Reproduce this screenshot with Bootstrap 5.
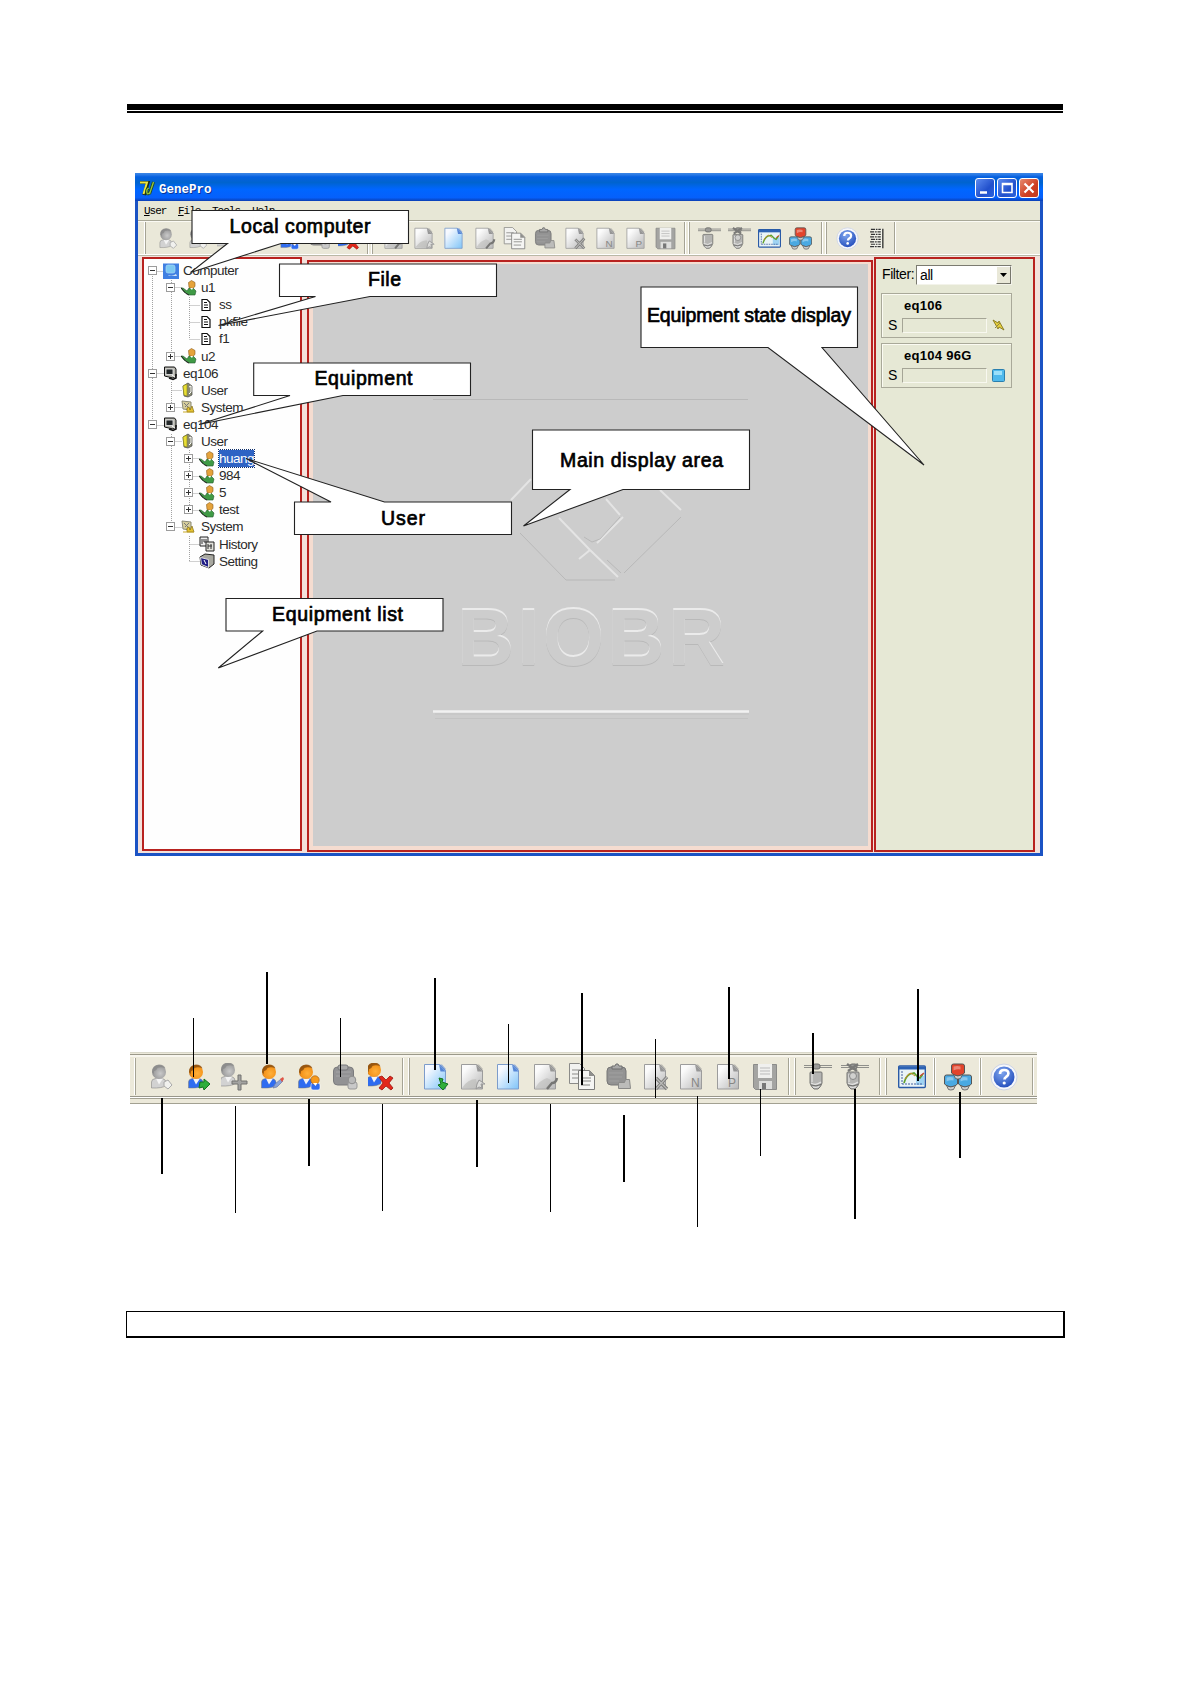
<!DOCTYPE html>
<html lang="en">
  <head>
    <meta charset="UTF-8" />
    <meta name="viewport" content="width=device-width, initial-scale=1.0" />
    <title>GenePro</title>
    <link
      href="https://cdn.jsdelivr.net/npm/bootstrap@5.3.0/dist/css/bootstrap.min.css"
      rel="stylesheet"
    />
    <style>
      body {
        background: #fff;
        color: #000;
        font-family: "Liberation Sans", Arial, sans-serif;
      }
      .sheet {
        width: 1190px;
        height: 1684px;
        padding: 104px 127px 0 127px;
        overflow: hidden;
      }
      .rule-thick { height: 6px; background: #000; }
      .rule-thin { height: 2px; margin-top: 1px; background: #000; }

      /* application window */
      .app-window {
        width: 908px;
        height: 683px;
        margin: 60px 0 0 8px;
        background: #e7e7d6;
        border: solid #1b53c4;
        border-width: 0 3px 3px;
      }
      .title-bar {
        height: 28px;
        margin: 0 -3px;
        padding: 2px 4px 0 5px;
        background: linear-gradient(#3d86e4 0, #2a7ae6 6%, #0560e0 14%, #0064cf 34%, #0066ff 58%, #0560fb 88%, #0b3fb4 100%);
      }
      .title-text {
        font: bold 12.5px "Liberation Mono", monospace;
        color: #fff;
        text-shadow: 1px 1px 0 #0a3596;
      }
      .win-btn {
        width: 20px;
        height: 20px;
        border: 1px solid #fff;
        border-radius: 3px;
        background: linear-gradient(135deg, #5c8bf0, #2150cc 60%, #2b63dd);
      }
      .win-btn.close-btn { background: linear-gradient(135deg, #e68a70, #cf3f22 60%, #c03a20); }
      .menu-row {
        height: 19px;
        padding-left: 6px;
        font: 11px "Liberation Mono", monospace;
        letter-spacing: -1px;
      }
      .menu-row span { width: 34px; }
      .menu-row span:nth-child(3) { width: 40px; }
      .tools-row {
        height: 36px;
        padding: 1px 0 1px 7px;
        background: #eae8d9;
        border-top: 1px solid #a9a898;
        border-bottom: 1px solid #b9b8a6;
        box-shadow: inset 0 1px #fbfaf4, inset 0 -1px #fff;
      }
      .tool-group {
        margin-right: 4px;
        border: solid #a5a394;
        border-width: 0 1px;
        box-shadow: -1px 0 #fff, 1px 0 #fff;
      }
      .tool-group.joined { margin-left: -7px; }
      .tool-slot { width: 30.3px; }
      .tool-slot svg { width: 23px; height: 23px; }

      /* disabled and enabled icon colours */
      .off { --head: url(#headOff); --body: #d2d2d2; --dark: #8a8a8a; --paper: url(#paperOff); --fold: #969696; --edge: #9c9c9c; }
      .on { --head: url(#headOn); --body: #2f6cf0; --dark: #8a4c0c; --paper: url(#paperOn); --fold: #5686d6; --edge: #7c9ccb; }

      /* work area */
      .work-area { height: 597px; padding: 1px 5px 1px 4px; background: #f3e2dc; }
      .red-pane { border: 2px solid #b8221f; }
      .tree-pane { width: 160px; height: 594px; margin-right: 5px; padding: 3px 0 0 4px; background: #fefefe; }
      .main-pane { width: 566px; height: 592px; margin: 3px 1px 0 0; padding: 2px 3px 4px 4px; background: #f5dcd0; }
      .main-canvas { background: #cdcdcd; }
      .state-pane { width: 161px; height: 595px; padding: 5px 21px 0 5px; background: #e6e8d5; }

      .tree-row {
        height: 17.1px;
        line-height: 17px;
        font-size: 13.5px;
        letter-spacing: -0.5px;
        color: #2a2a2a;
      }
      .level-1 { padding-left: 18px; }
      .level-2 { padding-left: 36px; }
      .toggle-box {
        width: 9px;
        height: 9px;
        margin-right: 6px;
        flex: none;
      }
      .tree-row .tree-icon { width: 16px; height: 16px; margin-right: 4px; flex: none; }
      .picked { background: #2e63c4; color: #fff; outline: 1px dotted #10306c; }
      .tree-lines { left: 0; top: 0; }

      .filter-label { font-size: 14px; letter-spacing: -0.4px; width: 35px; padding-left: 1px; }
      .filter-box {
        height: 20px;
        border: 1px solid;
        border-color: #7b7b70 #f3f3ea #f3f3ea #7b7b70;
        background: #fff;
        font-size: 14px;
        letter-spacing: -0.4px;
        padding-left: 3px;
      }
      .filter-arrow { width: 15px; background: #e9e8d8; border: 1px solid; border-color: #fff #77776c #77776c #fff; }
      .state-box {
        height: 45px;
        border: 1px solid #a9a999;
        box-shadow: inset 1px 1px #fbfbf2;
        padding: 3px 6px 0 6px;
        font-size: 14px;
      }
      .state-box + .state-box { margin-top: 5px; }
      .state-name { font-size: 13px; font-weight: bold; line-height: 18px; padding-left: 16px; letter-spacing: 0.3px; }
      .state-line { height: 17px; margin-top: 2px; }
      .state-bar { width: 85px; height: 15px; border: 1px solid; border-color: #a5a596 #f8f8f0 #f8f8f0 #a5a596; }

      .callout-layer { left: 0; top: 0; pointer-events: none; }
      .callout-layer text {
        font-size: 19.5px;
        fill: #000;
        stroke: #000;
        stroke-width: 0.7;
      }

      /* toolbar figure with leader lines */
      .tool-figure { height: 290px; margin-top: 104px; padding: 92px 0 0 3px; }
      .strip {
        width: 907px;
        height: 52px;
        background: #ece9da;
        border-top: 1px solid #d9d8ca;
      }
      .strip-tools {
        height: 43px;
        margin-top: 1px;
        padding: 3px 0 1px 5px;
        border-top: 1px solid #9b998a;
        border-bottom: 1px solid #98968a;
        box-shadow: 0 1px #fff, inset 0 2px #f8f6ee;
      }
      .strip-foot { height: 6px; margin-top: 1px; border: solid #a3a192; border-width: 1px 0; }
      .strip .tool-group { margin-right: 6px; }
      .strip .tool-slot { width: 36.6px; }
      .strip .tool-slot svg { width: 28px; height: 28px; }
      .leader-layer { left: 0; top: 0; }

      .note-box { height: 27px; margin: 61px -2px 0 -1px; border: 2px solid #000; border-top-width: 1px; border-left-width: 1px; }
    </style>
  </head>
  <body>
    <!-- icon sprite -->
    <svg width="0" height="0" class="position-absolute">
      <defs>
        <linearGradient id="paperOff" x1="0" y1="0" x2="1" y2="1">
          <stop offset="0.2" stop-color="#fbfbfb" />
          <stop offset="1" stop-color="#b8b8b8" />
        </linearGradient>
        <linearGradient id="paperOn" x1="0" y1="0" x2="1" y2="1">
          <stop offset="0.2" stop-color="#f6f9ff" />
          <stop offset="1" stop-color="#7fc4f8" />
        </linearGradient>
        <radialGradient id="headOff" cx="0.6" cy="0.6" r="0.65">
          <stop offset="0" stop-color="#c9c9c9" />
          <stop offset="1" stop-color="#8f8f8f" />
        </radialGradient>
        <radialGradient id="headOn" cx="0.6" cy="0.6" r="0.65">
          <stop offset="0" stop-color="#ffb03a" />
          <stop offset="0.7" stop-color="#f4931a" />
          <stop offset="1" stop-color="#b8660c" />
        </radialGradient>
        <radialGradient id="helpFill" cx="0.4" cy="0.3" r="0.8">
          <stop offset="0" stop-color="#7fa6ee" />
          <stop offset="1" stop-color="#1c46b8" />
        </radialGradient>
        <g id="person">
          <path d="M3.5 25V19q0-3 4-3.500l7 0q3.500 1 3.500 4v3q-4 3-14.500 2.500z" style="fill: var(--body)" stroke="#777" stroke-width="0.5" />
          <path d="M8 15.500l3 6 4-6z" fill="#f4f4f4" />
          <circle cx="11" cy="9" r="7" style="fill: var(--head)" />
          <path d="M4 9q0-7 7-7.500 5 0 6.500 4-4-2-8-.5-1 3-3.500 3.300l-.3 3z" style="fill: var(--dark)" opacity="0.8" />
        </g>
        <g id="sheet-shape">
          <path d="M3.500 1.500h15l6 6v18.500h-21z" style="fill: var(--paper); stroke: var(--edge)" />
          <path d="M18 1.500l6.500 7h-5z" style="fill: var(--fold)" />
          <path d="M18 1.500h3l3.500 4v3z" style="fill: var(--fold)" opacity="0.6" />
        </g>
        <g id="bulb">
          <path d="M0 2.500h28M0 4.500h28" stroke="#8f8f8b" stroke-width="1.200" />
          <rect x="9" y="1" width="7" height="5" rx="2" fill="#9a9a98" stroke="#6c6c6a" />
          <path d="M6 10q0-1 1-1h10q1 0 1 1v10q-1 4-4 6h-4q-3-2-4-6z" fill="#b4b4b2" stroke="#747472" />
          <path d="M8 11v8M7 20q5 3 10-1M9 24q3 1 6-.5" fill="none" stroke="#e4e4e3" stroke-width="1.200" />
          <path d="M7 22q5 2 10-.5" fill="none" stroke="#6d6d6b" />
        </g>
        <g id="drum">
          <path d="M1 2q0-2 2-2h9q2 0 2 2v7q-3 3-6.500 3T1 9z" stroke="#555" />
          <path d="M3 10.500q4 3 9 0l-2 4q-3 1-5 0z" fill="#ccc" stroke="#555" stroke-width="0.800" />
          <path d="M3 2.500q4-1 7 0v3q-3-1-7 1z" fill="#fff" opacity="0.350" stroke="none" />
        </g>
      </defs>
      <symbol id="i-user-login" viewBox="0 0 28 28"><use href="#person" /><path d="M16 19l4-2 4 5-4 4-4-3z" fill="#f1f1ee" stroke="#aaa" /></symbol>
      <symbol id="i-user-go" viewBox="0 0 28 28"><use href="#person" /><path d="M15 19h4v-3l6 5-6 6-1-3-4 1z" fill="#2fae3b" stroke="#14731f" /></symbol>
      <symbol id="i-user-add" viewBox="0 0 28 28"><use href="#person" x="-4" y="-2" /><path d="M17 12h3v6h6v3h-6v6h-3v-6h-6v-3h6z" fill="#a3a3a1" stroke="#727270" /></symbol>
      <symbol id="i-user-edit" viewBox="0 0 28 28"><use href="#person" /><path d="M15 25l2-4 6-5 2 2-6 6z" fill="#8aa4d8" stroke="#6a78a8" stroke-width="0.700" /><path d="M22 16l3-2 1 2-2 3z" fill="#e05545" /></symbol>
      <symbol id="i-user-copy" viewBox="0 0 28 28"><use href="#person" /><rect x="16" y="20" width="9" height="7" rx="2" fill="#2f6cf0" stroke="#fff" stroke-width="0.600" /><circle cx="20" cy="17" r="4.200" fill="#f79a1c" stroke="#a8641a" stroke-width="0.700" /><path d="M18 20l2.500 3 2-3z" fill="#fff" /></symbol>
      <symbol id="i-user-paste" viewBox="0 0 28 28"><rect x="2.500" y="4" width="20" height="18" rx="4" fill="#929294" stroke="#7b7b7d" /><rect x="7" y="2" width="10" height="5" rx="2" fill="#aaa" stroke="#77777a" /><path d="M5 9h15M5 13h14" stroke="#a5a5a7" /><rect x="17" y="19" width="9" height="7" rx="2" fill="#c9c9c9" stroke="#999" /><circle cx="21" cy="17" r="3.800" fill="#b9b9b9" stroke="#8d8d8d" /></symbol>
      <symbol id="i-user-del" viewBox="0 0 28 28"><use href="#person" x="-5" y="-2" /><path d="M11 14l3-1 4 4 4-4 3 2-4 5 4 5-2 2-5-4-4 4-3-2 4-5z" fill="#e2281b" stroke="#9c1610" stroke-width="0.800" /></symbol>

      <symbol id="i-page-in" viewBox="0 0 28 28"><use href="#sheet-shape" /><path d="M18 15l4 1-1 3 6 2-5 6-5-5 3-1z" fill="#2fae3b" stroke="#14731f" /></symbol>
      <symbol id="i-page-out" viewBox="0 0 28 28"><use href="#sheet-shape" /><path d="M4 25q6-9 14-9l2 9z" fill="#bdbdbb" opacity="0.700" /><path d="M21 17l6 4h-4l1 4-3-1-3 2 1-5z" fill="#dededc" stroke="#999" /></symbol>
      <symbol id="i-page" viewBox="0 0 28 28"><use href="#sheet-shape" /></symbol>
      <symbol id="i-page-edit" viewBox="0 0 28 28"><use href="#sheet-shape" /><path d="M4 25q5-8 12-10l4 2-2 8z" fill="#bdbdbb" opacity="0.600" /><path d="M26 15q-1 5-5 5l-5 6" fill="none" stroke="#767674" stroke-width="2.500" /></symbol>
      <symbol id="i-copy" viewBox="0 0 28 28"><path d="M1.500.500h10l5 5v15h-15z" fill="#f2f2f0" stroke="#8b8b89" /><path d="M4 7h9M4 11h8M4 15h8" stroke="#8a8a88" /><path d="M10.500 7.500h11l5 5v14h-16z" fill="#f5f5f3" stroke="#7d7d7b" /><path d="M21 7v6h6z" fill="#8f8f8d" /><path d="M13 15h10M13 18h10M13 22h9" stroke="#858583" /></symbol>
      <symbol id="i-paste" viewBox="0 0 28 28"><rect x="3" y="4" width="19" height="18" rx="4" fill="#939393" stroke="#767676" /><path d="M8 6V3h3l1-2h2l1 2h3v3z" fill="#a8a8a8" stroke="#6e6e6e" /><path d="M5 10h14M5 14h13M5 18h10" stroke="#a0a0a0" /><path d="M14.500 19.500h6l1-3h4l1 9h-12z" fill="#bcbcba" stroke="#8a8a88" /></symbol>
      <symbol id="i-page-del" viewBox="0 0 28 28"><use href="#sheet-shape" /><path d="M15 15l11 11M26 14L15 26" stroke="#7a7a78" stroke-width="3.200" /><path d="M15 15l11 11M26 14L15 26" stroke="#b9b9b7" stroke-width="1.300" /></symbol>
      <symbol id="i-save" viewBox="0 0 28 28"><path d="M2.500 1.500h23v25h-21l-2-2z" fill="#a4a4a2" stroke="#8b8b89" /><path d="M7 1h14v14H7z" fill="#f0f0ee" /><path d="M9 5h10M9 8h10M9 11h10" stroke="#bbb" /><path d="M8 18h13v8H8z" fill="#dededc" /><path d="M11 20h4v6h-4z" fill="#777" /></symbol>
      <symbol id="i-start" viewBox="0 0 28 28"><use href="#bulb" /></symbol>
      <symbol id="i-stop" viewBox="0 0 28 28"><use href="#bulb" /><path d="M6 1l10 7M17 1L7 8" stroke="#7a7a78" stroke-width="2.400" /><circle cx="12" cy="13" r="3.500" fill="#d0d0ce" stroke="#888" /></symbol>
      <symbol id="i-chart" viewBox="0 0 28 28"><rect x="0.700" y="3" width="26.600" height="21.500" rx="1" fill="#eaf4f7" stroke="#2a5aa6" stroke-width="1.400" /><path d="M1 3.500h26v3H1z" fill="#2d62b4" /><path d="M18 13h8v9h-8z" fill="#9fd3f3" /><path d="M4 8v13M4 21h21" stroke="#4461a0" stroke-dasharray="2 1" /><path d="M6 20q2-7 6-9l4-1 4 4 2 1 3-4" fill="none" stroke="#5fa02c" stroke-width="1.700" /><path d="M7 16q3-6 6-6l4 3" fill="none" stroke="#c58a28" /><path d="M22 13l4-3" stroke="#d14436" stroke-width="1.200" /></symbol>
      <symbol id="i-network" viewBox="0 0 28 28"><use href="#drum" fill="#4aa9e2" x="-0.500" y="12" /><use href="#drum" fill="#4aa9e2" x="13.500" y="12" /><use href="#drum" fill="#e2442c" x="6.500" y="1" /></symbol>
      <symbol id="i-help" viewBox="0 0 28 28"><circle cx="14" cy="14" r="13" fill="#f6f7fb" stroke="#ccd3e4" /><circle cx="14" cy="14" r="10.500" fill="url(#helpFill)" /><path d="M10 11q0-4 4.200-4t4.200 3.600q0 2-2.400 3.400-1.500 1-1.500 2.500" fill="none" stroke="#fff" stroke-width="2.700" /><circle cx="14.200" cy="20" r="1.600" fill="#fff" /></symbol>
      <symbol id="i-list" viewBox="0 0 28 28"><path d="M7 2h13v24H7z" fill="#f3f3ea" /><path d="M6 3h12M5 6h13M6 9h12M5 12h13M6 15h12M5 18h13M6 21h12M5 24h13" stroke="#333" stroke-width="1.500" stroke-dasharray="5 1 2 1" /><path d="M20.500 2v24" stroke="#222" stroke-width="1.500" /></symbol>

      <symbol id="t-computer" viewBox="0 0 16 16"><rect width="16" height="15.500" x="0" y="0.500" fill="#3f7fe2" /><rect x="3" y="2" width="9" height="8" rx="2" fill="#7cc8f2" stroke="#a9d9f5" stroke-width="0.700" /><path d="M5 12q4 2 8-1l1 2H6z" fill="#cfe2f5" /></symbol>
      <symbol id="t-person" viewBox="0 0 16 16"><path d="M0 8l3 4 5 3h6l1-4-3-3H8l-2 3-4-3z" fill="#3f9a45" stroke="#24582c" stroke-width="0.600" /><path d="M0 8l5 5.500 3 1.500" stroke="#222" fill="none" /><path d="M7.500 2.500l3-2 3.500 2v4l-2.500 2-3.500-1z" fill="#e5a33b" stroke="#8a5a1c" stroke-width="0.600" /><path d="M9 8l2 2 1-2z" fill="#fff" /></symbol>
      <symbol id="t-file" viewBox="0 0 16 16"><path d="M3 2.500h5l3 3v8H3z" fill="#fff" stroke="#111" stroke-width="1.200" /><path d="M5 5.500h3M5 8h4M5 10.500h4" stroke="#111" /></symbol>
      <symbol id="t-equip" viewBox="0 0 16 16"><path d="M1.500 2h10l1.500 2v7l-3 2-8.500-2z" fill="#b5b5ad" stroke="#111" /><rect x="3" y="4" width="7" height="5.500" fill="#23282a" stroke="#eee" stroke-width="0.800" /><path d="M6 13l4 1.500 3-1.500V9" stroke="#111" stroke-width="1.600" fill="none" /><path d="M9 10l3 2" stroke="#fff" /></symbol>
      <symbol id="t-users" viewBox="0 0 16 16"><path d="M2 4l5-3 4 3v9l-4 2-4-1z" fill="#888a72" stroke="#444" stroke-width="0.700" /><path d="M2 4l4-2v12l-3-1z" fill="#e9df35" stroke="#8a8418" stroke-width="0.600" /><path d="M8 5l2-1v6l-2 2" stroke="#fff" fill="none" /></symbol>
      <symbol id="t-system" viewBox="0 0 16 16"><path d="M1 2l9 1v8l-8-1z" fill="#d7cf9c" stroke="#8a8a78" /><path d="M3 4l4 4M4 8l4-4" stroke="#777" /><path d="M6 13V9l2-1 1 3 2-4 2 6z" fill="#e6c431" stroke="#7f6a18" stroke-width="0.700" /><path d="M2 13h11" stroke="#c9a92b" /></symbol>
      <symbol id="t-history" viewBox="0 0 16 16"><path d="M1 1h8v9H1z" fill="#eee" stroke="#222" /><path d="M3 3v5M5 3v3h2V3" stroke="#333" fill="none" /><path d="M7 6h8v9H7z" fill="#e2e2dc" stroke="#222" /><path d="M9 8v5M9 10h4M12 8v5" stroke="#333" fill="none" /></symbol>
      <symbol id="t-setting" viewBox="0 0 16 16"><path d="M1 4l5-3 9 1v9l-5 4-8-3z" fill="#a8a8a0" stroke="#222" /><path d="M1.500 4.500l8 2v8l-7-3z" fill="#201d86" stroke="#ddd" /><path d="M5 7l2 4" stroke="#fff" /></symbol>
    </svg>

    <main class="sheet">
      <div class="rule-thick"></div>
      <div class="rule-thin"></div>

      <section class="app-window position-relative">
        <header class="title-bar d-flex align-items-center">
          <svg width="15" height="15" viewBox="0 0 15 15" class="me-1">
            <path d="M0 1h8L4 14" fill="none" stroke="#1d2b1c" stroke-width="3.600" />
            <path d="M0 1.500h7L3.500 13" fill="none" stroke="#ece63e" stroke-width="2" />
            <path d="M13.500 1l-4 12M9 7q-3 1-2 5 1 2 3-1" fill="none" stroke="#1d4a24" stroke-width="3" />
            <path d="M13.500 1l-4 12M9 7q-3 1-2 5 1 2 3-1" fill="none" stroke="#98c63e" stroke-width="1.300" />
          </svg>
          <span class="title-text me-auto pt-1">GenePro</span>
          <div class="d-flex" style="gap: 2px">
            <div class="win-btn"><svg class="d-block" width="18" height="18"><path d="M4 13.500h7" stroke="#fff" stroke-width="2.500" /></svg></div>
            <div class="win-btn"><svg class="d-block" width="18" height="18"><path d="M4.500 4.500h9.500v9h-9.500zM4 5.500h10" fill="none" stroke="#fff" stroke-width="1.600" /></svg></div>
            <div class="win-btn close-btn"><svg class="d-block" width="18" height="18"><path d="M4.500 4.500l9 9M13.500 4.500l-9 9" stroke="#fff" stroke-width="2.200" /></svg></div>
          </div>
        </header>
        <nav class="menu-row d-flex align-items-center">
          <span><u>U</u>ser</span><span><u>F</u>ile</span><span><u>T</u>ools</span><span><u>H</u>elp</span>
        </nav>
        <div class="tools-row d-flex" id="mainTools"></div>

        <div class="work-area d-flex align-items-start">
          <div class="red-pane tree-pane position-relative">
            <svg class="tree-lines position-absolute" width="100" height="320" viewBox="144 259 100 320">
              <path d="M152.500 276V425M152.500 271.500H164M152.500 373.500H164M152.500 425.500H164M171.500 280V356M171.500 287.500H182M171.500 356.500H182M171.500 382V407M171.500 390.500H182M171.500 407.500H182M171.500 434V527M171.500 441.500H182M171.500 527.500H182M189.500 297V339M189.500 305.500H200M189.500 322.500H200M189.500 339.500H200M189.500 450V510M189.500 458.500H200M189.500 476.500H200M189.500 493.500H200M189.500 510.500H200M189.500 536V562M189.500 544.500H200M189.500 561.500H200" fill="none" stroke="#a2a2a2" stroke-dasharray="1 1" />
            </svg>
            <div class="position-relative" id="tree"></div>
          </div>
          <div class="red-pane main-pane d-flex">
            <svg class="main-canvas" width="555" height="582" viewBox="313 264 555 582">
              <path d="M433 399.500H748" stroke="#b9b9b9" />
              <path d="M433 711.500H749" stroke="#f1f1f1" stroke-width="2.500" />
              <path d="M435 714H749M435 718.500H748" stroke="#c0c0c0" stroke-width="0.800" />
              <path d="M511 500l20-21M660 490l21 20M559 518l31 32 28 27M579 559l11-9M597 543l26-26M606 499l14 16" fill="none" stroke="#e4e4e4" stroke-width="2" />
              <path d="M520 533l46 47h49M681 517l-57 56M584 537l8 5 8-3 20-22M607 560l14 13" fill="none" stroke="#b5b5b5" stroke-width="0.900" />
              <!-- embossed name: highlight above, shade below -->
              <g font-family="Liberation Sans, sans-serif" font-size="79" font-weight="bold">
                <text x="457" y="665.500" textLength="268" fill="#b9b9b9">BIOBR</text>
                <text x="457" y="662.500" textLength="268" fill="#ebebeb">BIOBR</text>
                <text x="457" y="664.500" textLength="268" fill="#cdcdcd">BIOBR</text>
              </g>
            </svg>
          </div>
          <aside class="red-pane state-pane">
            <div class="d-flex align-items-center mb-2">
              <span class="filter-label">Filter:</span>
              <div class="filter-box d-flex flex-fill align-items-center">
                <span class="me-auto lh-1">all</span>
                <span class="filter-arrow d-flex h-100 align-items-center justify-content-center">
                  <svg width="7" height="4"><path d="M0 0h7L3.500 4z" /></svg>
                </span>
              </div>
            </div>
            <div class="state-box">
              <div class="state-name">eq106</div>
              <div class="state-line d-flex align-items-center justify-content-between">
                <span>S</span><span class="state-bar"></span>
                <svg width="13" height="13" viewBox="0 0 13 13"><path d="M1 1l5 3 1-2 5 9-5-3-1 2z" fill="#e6cf3c" stroke="#84761f" stroke-width="0.900" /><path d="M3 9l5-5" stroke="#8d8445" /></svg>
              </div>
            </div>
            <div class="state-box">
              <div class="state-name">eq104 96G</div>
              <div class="state-line d-flex align-items-center justify-content-between">
                <span>S</span><span class="state-bar"></span>
                <svg width="13" height="13" viewBox="0 0 13 13"><rect x="0.500" y="0.500" width="12" height="12" rx="1" fill="#4fb9ec" stroke="#2a7fae" /><path d="M2 2h8v4H2z" fill="#9be0fa" /></svg>
              </div>
            </div>
          </aside>
        </div>

        <!-- callouts over the window -->
        <svg class="callout-layer position-absolute" width="902" height="680" viewBox="138 173 902 680">
          <g fill="#fff" stroke="#222" stroke-width="1.100">
            <path d="M192 210.500H408.500V243.500H281L190.500 272.500 227.500 243.500H192z" />
            <path d="M279.500 264H496.500V296.500H370L218.500 325.500 315.500 296.500H279.500z" />
            <path d="M253.700 363H470.500V395.500H343L199 424.500 290 395.500H253.700z" />
            <path d="M294.500 502H331L246 458.500 384.500 502H511.500V534.500H294.500z" />
            <path d="M532.500 430H749.500V489.500H623L523.500 526 570 489.500H532.500z" />
            <path d="M226 598.500H443V631H317L218.300 668 262.700 631H226z" />
            <path d="M641 287H857.500V347.500H822L924 465 768 347.500H641z" />
          </g>
          <text x="229.500" y="232.500" textLength="141">Local computer</text>
          <text x="368" y="286" textLength="33">File</text>
          <text x="314.500" y="385" textLength="98">Equipment</text>
          <text x="381" y="525" textLength="44">User</text>
          <text x="560" y="467" textLength="163">Main display area</text>
          <text x="272" y="620.500" textLength="131">Equipment list</text>
          <text x="647" y="322" textLength="204">Equipment state display</text>
        </svg>
      </section>

      <section class="tool-figure position-relative">
        <div class="strip">
          <div class="strip-tools d-flex" id="figureTools"></div>
          <div class="strip-foot"></div>
        </div>
        <svg class="leader-layer position-absolute" id="leaders" width="936" height="290" viewBox="127 960 936 290"></svg>
      </section>

      <div class="note-box"></div>
    </main>

    <script src="https://cdn.jsdelivr.net/npm/bootstrap@5.3.0/dist/js/bootstrap.bundle.min.js"></script>
    <script>
      // [icon, enabled, letter on the icon]
      const userTools = [
        ["user-login", 0], ["user-go", 1], ["user-add", 0], ["user-edit", 1],
        ["user-copy", 1], ["user-paste", 0], ["user-del", 1],
      ];
      const pageTools = [
        ["page-in", 1], ["page-out", 0], ["page", 1], ["page-edit", 0], ["copy", 0],
        ["paste", 0], ["page-del", 0], ["page", 0, "N"], ["page", 0, "P"], ["save", 0],
      ];
      const windowPageTools = [["page-edit", 0], ...pageTools.slice(1)];
      const windowUserTools = [userTools[0], ["user-login", 0], ...userTools.slice(2)];

      function toolIcon([icon, on, letter]) {
        const text = letter ? `<text x="14" y="24" font-size="12" fill="#868684">${letter}</text>` : "";
        return `<span class="tool-slot d-flex flex-shrink-0 justify-content-center ${on ? "on" : "off"}">
          <svg viewBox="0 0 28 28"><use href="#i-${icon}" width="28" height="28"/>${text}</svg>
        </span>`;
      }

      // width and start padding of each group in px
      function renderTools(id, groups) {
        document.getElementById(id).innerHTML = groups
          .map(
            (g) =>
              `<div class="tool-group ${g.joined ? "joined" : ""} d-flex flex-shrink-0 align-items-center" style="width:${g.width}px;padding-left:${g.pad}px">${g.items.map(toolIcon).join("")}</div>`
          )
          .join("");
      }

      renderTools("mainTools", [
        { width: 223, pad: 7, items: windowUserTools },
        { width: 313, pad: 5, items: windowPageTools },
        { width: 133, pad: 4, items: [["start", 0], ["stop", 0], ["chart", 1], ["network", 1]] },
        { width: 69, pad: 5, items: [["help", 1], ["list", 1]] },
      ]);

      renderTools("figureTools", [
        { width: 268, pad: 8, items: userTools },
        { width: 380, pad: 7, items: pageTools },
        { width: 85, pad: 4, items: [["start", 0], ["stop", 0]] },
        { width: 49, pad: 7, items: [["chart", 1]] },
        { width: 47, pad: 5, joined: true, items: [["network", 1]] },
        { width: 53, pad: 5, joined: true, items: [["help", 1]] },
      ]);

      // [level, toggle, icon, label, selected]
      const tree = [
        [0, "-", "computer", "Computer"],
        [1, "-", "person", "u1"],
        [2, "", "file", "ss"],
        [2, "", "file", "pkfile"],
        [2, "", "file", "f1"],
        [1, "+", "person", "u2"],
        [0, "-", "equip", "eq106"],
        [1, "", "users", "User"],
        [1, "+", "system", "System"],
        [0, "-", "equip", "eq104"],
        [1, "-", "users", "User"],
        [2, "+", "person", "huang", true],
        [2, "+", "person", "984"],
        [2, "+", "person", "5"],
        [2, "+", "person", "test"],
        [1, "-", "system", "System"],
        [2, "", "history", "History"],
        [2, "", "setting", "Setting"],
      ];
      document.getElementById("tree").innerHTML = tree
        .map(([level, toggle, icon, label, picked]) => {
          const box = toggle
            ? `<rect x=".5" y=".5" width="8" height="8" fill="#fff" stroke="#9c9c9c"/><path d="M2 4.500h5${toggle === "+" ? "M4.500 2v5" : ""}" stroke="#333"/>`
            : "";
          return `<div class="tree-row level-${level} d-flex align-items-center">
            <svg class="toggle-box">${box}</svg>
            <svg class="tree-icon"><use href="#t-${icon}"/></svg>
            <span class="${picked ? "picked" : ""}">${label}</span>
          </div>`;
        })
        .join("");

      // leader lines: [x, top, bottom, width]
      const leaders = [
        [193.5, 1018, 1077, 1], [267, 972, 1064, 2], [340.5, 1018, 1077, 1],
        [435, 978, 1070, 2], [508.5, 1024, 1083, 1], [582, 993, 1085, 2],
        [655.5, 1039, 1098, 1], [729, 987, 1079, 2], [813, 1033, 1074, 2],
        [918, 989, 1081, 2], [162, 1098, 1174, 2], [235.5, 1106, 1213, 1],
        [309, 1099, 1166, 2], [382.5, 1104, 1211, 1], [477, 1100, 1167, 2],
        [550.5, 1104, 1212, 1], [624, 1115, 1182, 2], [697.5, 1096, 1227, 1],
        [760.5, 1089, 1156, 1], [855, 1089, 1219, 2], [960, 1092, 1158, 2],
      ];
      document.getElementById("leaders").innerHTML = leaders
        .map(([x, y1, y2, w]) => `<path d="M${x} ${y1}V${y2}" stroke="#000" stroke-width="${w}"/>`)
        .join("");
    </script>
  </body>
</html>
